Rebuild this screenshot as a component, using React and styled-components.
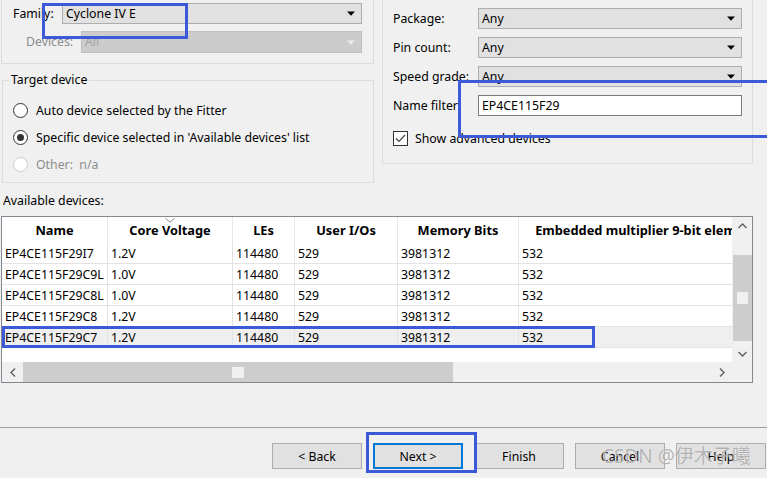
import React from 'react';
import styled, { createGlobalStyle } from 'styled-components';

const GlobalStyle = createGlobalStyle`
  html, body { margin: 0; padding: 0; background: #f0f0f0; }
  body {
    font-family: "Noto Sans", "Segoe UI", "Liberation Sans", sans-serif;
    font-size: 12.3px;
    color: #000;
  }
  * { box-sizing: border-box; }
`;

const Page = styled.div`
  position: relative;
  width: 767px;
  height: 478px;
  overflow: hidden;
  background: #f0f0f0;
  display: flex;
  flex-direction: column;
`;

const TopRow = styled.div`
  display: flex;
  align-items: flex-start;
  height: 184px;
`;

const LeftColumn = styled.div`
  width: 374px;
  padding-left: 1px;
  display: flex;
  flex-direction: column;
`;

const OpenGroup = styled.div`
  width: ${p => p.$w}px;
  height: ${p => p.$h}px;
  margin-left: ${p => p.$ml || 0}px;
  border: 1px solid #dcdcdc;
  border-top: none;
  display: flex;
  flex-direction: column;
`;

const FieldRow = styled.div`
  display: flex;
  align-items: center;
  height: ${p => p.$h}px;
  margin-top: ${p => p.$mt}px;
`;

const FieldLabel = styled.span`
  padding-left: ${p => p.$pl || 0}px;
  color: ${p => (p.$disabled ? '#8d8d8d' : '#000')};
  white-space: nowrap;
  line-height: 16px;
`;

const Combo = styled.div`
  width: ${p => p.$w}px;
  height: 100%;
  margin-left: auto;
  margin-right: ${p => p.$mr || 0}px;
  display: flex;
  align-items: center;
  justify-content: space-between;
  padding: 0 6px 0 3px;
  background: ${p => (p.$disabled ? '#cccccc' : '#e1e1e1')};
  border: 1px solid ${p => (p.$disabled ? '#bfbfbf' : '#adadad')};
  color: ${p => (p.$disabled ? '#a3a3a3' : '#000')};
  line-height: 16px;
`;

const TextInput = styled.div`
  width: ${p => p.$w}px;
  height: 100%;
  display: flex;
  align-items: center;
  padding-left: 3px;
  background: #fff;
  border: 1px solid #7a7a7a;
  line-height: 16px;
`;

const Arrow = ({ disabled }) => (
  <svg width="8" height="5" viewBox="0 0 8 5">
    <path d="M0 0.5H8L4 4.8Z" fill={disabled ? '#ececec' : '#000'} />
  </svg>
);

const Fieldset = styled.fieldset`
  width: 372px;
  margin: 8px 0 0 1px;
  padding: 9px 0 4px 0;
  border: 1px solid #dcdcdc;
  min-width: 0;
`;

const Legend = styled.legend`
  margin-left: 6px;
  padding: 0 2px;
  line-height: 16px;
`;

const RadioRow = styled.div`
  display: flex;
  align-items: center;
  gap: 8px;
  height: 27px;
  padding-left: 10px;
  color: ${p => (p.$disabled ? '#8d8d8d' : '#000')};
  white-space: nowrap;
`;

const RadioCircle = styled.span`
  width: 15px;
  height: 15px;
  border-radius: 50%;
  border: 1px solid ${p => (p.$disabled ? '#cccccc' : '#333')};
  background: #fff;
  display: flex;
  align-items: center;
  justify-content: center;
  flex: none;
  &::after {
    content: '';
    width: 7px;
    height: 7px;
    border-radius: 50%;
    background: ${p => (p.$checked ? '#333' : 'transparent')};
  }
`;

const RightGrid = styled.div`
  display: grid;
  grid-template-columns: 85px 264px;
  grid-auto-rows: 21px;
  row-gap: 8px;
  margin: 8px 0 0 10px;
  align-items: center;
`;

const CheckRow = styled.div`
  display: flex;
  align-items: center;
  gap: 7px;
  margin: 15px 0 0 10px;
  height: 15px;
`;

const CheckBox = styled.span`
  width: 15px;
  height: 15px;
  border: 1px solid #333;
  background: #fff;
  display: flex;
  align-items: center;
  justify-content: center;
  flex: none;
`;

const SectionLabel = styled.div`
  margin: 9px 0 0 3px;
  line-height: 16px;
`;

const TableFrame = styled.div`
  margin: 7px 0 0 1px;
  width: 752px;
  height: 167px;
  border: 1px solid #828790;
  display: grid;
  grid-template-columns: 730px 20px;
  grid-template-rows: 145px 20px;
  background: #fff;
`;

const TableBody = styled.div`
  overflow: hidden;
  background: #fff;
`;

const GridRow = styled.div`
  display: grid;
  grid-template-columns: ${p => p.$cols};
  width: max-content;
  background: ${p => (p.$selected ? '#efefef' : '#fff')};
`;

const HeadCell = styled.div`
  position: relative;
  height: 26px;
  display: flex;
  align-items: center;
  justify-content: center;
  font-weight: 700;
  font-size: 12.8px;
  white-space: nowrap;
  overflow: hidden;
  border-right: 1px solid #e8e8e8;
`;

const SortMark = styled.svg`
  position: absolute;
  top: 1px;
  left: 50%;
  margin-left: -5px;
`;

const Cell = styled.div`
  height: 21px;
  display: flex;
  align-items: center;
  padding-left: 3px;
  white-space: nowrap;
  overflow: hidden;
  border-right: 1px solid #e3e3e3;
  border-bottom: 1px solid #e3e3e3;
`;

const VScroll = styled.div`
  background: #f0f0f0;
  display: flex;
  flex-direction: column;
  align-items: center;
`;

const ScrollArrow = styled.div`
  width: ${p => p.$w || 20}px;
  height: ${p => p.$h || 17}px;
  display: flex;
  align-items: center;
  justify-content: center;
  flex: none;
`;

const VThumb = styled.div`
  width: 19px;
  height: 86px;
  margin-top: ${p => p.$offset}px;
  background: #cdcdcd;
  display: flex;
  align-items: center;
  justify-content: center;
  &::after {
    content: '';
    width: 11px;
    height: 12px;
    background: #f0f0f0;
  }
`;

const Spacer = styled.div`
  flex: 1;
`;

const HScroll = styled.div`
  background: #f0f0f0;
  display: flex;
  align-items: stretch;
`;

const HThumb = styled.div`
  width: ${p => p.$w}px;
  background: #cdcdcd;
  display: flex;
  align-items: center;
  justify-content: center;
  &::after {
    content: '';
    width: 12px;
    height: 11px;
    background: #f0f0f0;
  }
`;

const Corner = styled.div`
  background: #f0f0f0;
`;

const Separator = styled.div`
  margin-top: 44px;
  height: 1px;
  background: #a0a0a0;
`;

const ButtonBar = styled.div`
  display: flex;
  justify-content: flex-end;
  gap: 11px;
  margin-top: 15px;
  padding-right: 1px;
`;

const Button = styled.div`
  width: 90px;
  height: 26px;
  display: flex;
  align-items: center;
  justify-content: center;
  background: #e1e1e1;
  border: ${p => (p.$default ? '2px solid #0078d7' : '1px solid #adadad')};
  white-space: nowrap;
`;

const Highlight = styled.div`
  position: absolute;
  left: ${p => p.$x}px;
  top: ${p => p.$y}px;
  width: ${p => p.$w}px;
  height: ${p => p.$h}px;
  border: 3px solid #3c5ad8;
  pointer-events: none;
`;

const Watermark = styled.div`
  position: absolute;
  left: 602px;
  top: 444px;
  font-family: "Noto Sans", "Noto Sans CJK SC", sans-serif;
  font-size: 19px;
  line-height: 24px;
  color: rgba(110, 110, 110, 0.5);
  text-shadow: 0 0 1px rgba(255, 255, 255, 0.9);
  white-space: nowrap;
  pointer-events: none;
`;

const columns = [
  { title: 'Name', w: 106 },
  { title: 'Core Voltage', w: 125, sorted: true },
  { title: 'LEs', w: 62 },
  { title: 'User I/Os', w: 103 },
  { title: 'Memory Bits', w: 121 },
  { title: 'Embedded multiplier 9-bit elements', w: 262 },
];

const rows = [
  ['EP4CE115F29I7', '1.2V', '114480', '529', '3981312', '532'],
  ['EP4CE115F29C9L', '1.0V', '114480', '529', '3981312', '532'],
  ['EP4CE115F29C8L', '1.0V', '114480', '529', '3981312', '532'],
  ['EP4CE115F29C8', '1.2V', '114480', '529', '3981312', '532'],
  ['EP4CE115F29C7', '1.2V', '114480', '529', '3981312', '532'],
];

const gridCols = columns.map(c => `${c.w}px`).join(' ');

const Chevron = ({ dir }) => {
  const d = {
    up: 'M0.5 5L4.5 1L8.5 5',
    down: 'M0.5 1L4.5 5L8.5 1',
    left: 'M5 0.5L1 4.5L5 8.5',
    right: 'M1 0.5L5 4.5L1 8.5',
  }[dir];
  const vertical = dir === 'up' || dir === 'down';
  return (
    <svg width={vertical ? 9 : 6} height={vertical ? 6 : 9} viewBox={vertical ? '0 0 9 6' : '0 0 6 9'}>
      <path d={d} fill="none" stroke="#606060" strokeWidth="1.4" />
    </svg>
  );
};

export default function App() {
  return (
    <Page>
      <GlobalStyle />
      <TopRow>
        <LeftColumn>
          <OpenGroup $w={373} $h={64}>
            <FieldRow $h={21} $mt={3}>
              <FieldLabel $pl={11}>Family:</FieldLabel>
              <Combo $w={300} $mr={11}>
                <span>Cyclone IV E</span>
                <Arrow />
              </Combo>
            </FieldRow>
            <FieldRow $h={22} $mt={7}>
              <FieldLabel $pl={24} $disabled>Devices:</FieldLabel>
              <Combo $w={281} $mr={11} $disabled>
                <span>All</span>
                <Arrow disabled />
              </Combo>
            </FieldRow>
          </OpenGroup>
          <Fieldset>
            <Legend>Target device</Legend>
            <RadioRow>
              <RadioCircle />
              Auto device selected by the Fitter
            </RadioRow>
            <RadioRow>
              <RadioCircle $checked />
              Specific device selected in 'Available devices' list
            </RadioRow>
            <RadioRow $disabled>
              <RadioCircle $disabled />
              Other:&nbsp;&nbsp;n/a
            </RadioRow>
          </Fieldset>
        </LeftColumn>
        <OpenGroup $w={371} $h={164} $ml={8}>
          <RightGrid>
            <FieldLabel>Package:</FieldLabel>
            <Combo $w={264}><span>Any</span><Arrow /></Combo>
            <FieldLabel>Pin count:</FieldLabel>
            <Combo $w={264}><span>Any</span><Arrow /></Combo>
            <FieldLabel>Speed grade:</FieldLabel>
            <Combo $w={264}><span>Any</span><Arrow /></Combo>
            <FieldLabel>Name filter</FieldLabel>
            <TextInput $w={264}>EP4CE115F29</TextInput>
          </RightGrid>
          <CheckRow>
            <CheckBox>
              <svg width="13" height="13" viewBox="0 0 13 13">
                <path d="M2 6.5L5 9.5L11 3" fill="none" stroke="#444" strokeWidth="1.2" />
              </svg>
            </CheckBox>
            Show advanced devices
          </CheckRow>
        </OpenGroup>
      </TopRow>

      <SectionLabel>Available devices:</SectionLabel>
      <TableFrame>
        <TableBody>
          <GridRow $cols={gridCols}>
            {columns.map(c => (
              <HeadCell key={c.title}>
                {c.sorted && (
                  <SortMark width="10" height="5" viewBox="0 0 10 5">
                    <path d="M0.5 0.5L5 4L9.5 0.5" fill="none" stroke="#8a8a8a" strokeWidth="1" />
                  </SortMark>
                )}
                {c.title}
              </HeadCell>
            ))}
          </GridRow>
          {rows.map((r, i) => (
            <GridRow key={r[0]} $cols={gridCols} $selected={i === rows.length - 1}>
              {r.map((v, j) => (
                <Cell key={j}>{v}</Cell>
              ))}
            </GridRow>
          ))}
        </TableBody>
        <VScroll>
          <ScrollArrow><Chevron dir="up" /></ScrollArrow>
          <VThumb $offset={21} />
          <Spacer />
          <ScrollArrow><Chevron dir="down" /></ScrollArrow>
        </VScroll>
        <HScroll>
          <ScrollArrow $w={21} $h={20}><Chevron dir="left" /></ScrollArrow>
          <HThumb $w={430} />
          <Spacer />
          <ScrollArrow $w={21} $h={20}><Chevron dir="right" /></ScrollArrow>
        </HScroll>
        <Corner />
      </TableFrame>

      <Separator />
      <ButtonBar>
        <Button>&lt; Back</Button>
        <Button $default>Next &gt;</Button>
        <Button>Finish</Button>
        <Button>Cancel</Button>
        <Button>Help</Button>
      </ButtonBar>

      <Highlight $x={42} $y={3} $w={146} $h={36} />
      <Highlight $x={458} $y={80} $w={312} $h={58} />
      <Highlight $x={2} $y={326} $w={593} $h={22} />
      <Highlight $x={366} $y={432} $w={111} $h={41} />
      <Watermark>CSDN @伊木子曦</Watermark>
    </Page>
  );
}
